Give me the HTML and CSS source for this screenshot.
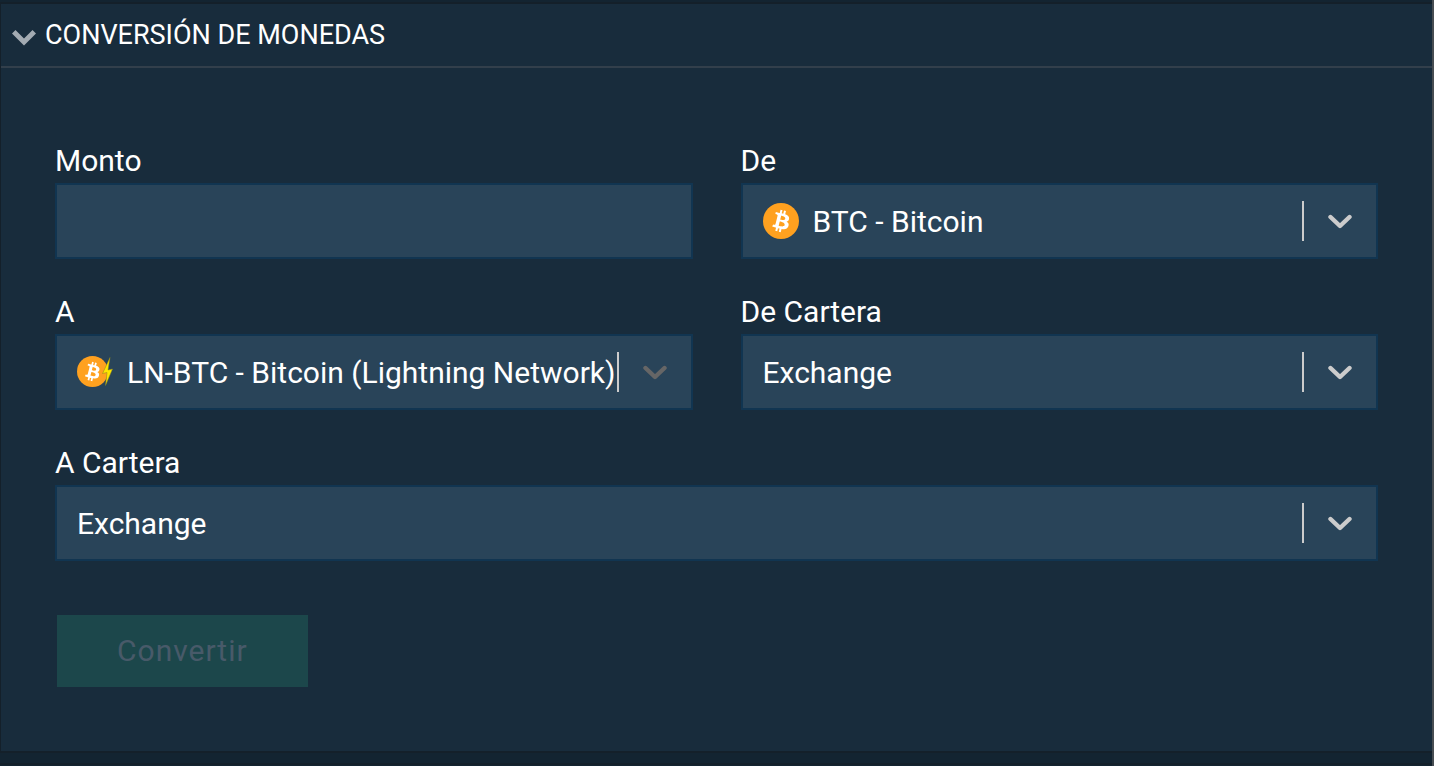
FILE: index.html
```html
<!DOCTYPE html>
<html lang="es">
<head>
    <meta charset="UTF-8">
    <meta name="viewport" content="width=device-width, initial-scale=1.0">
    <title>Conversión de Monedas</title>
    <link rel="stylesheet" href="styles.css">
</head>
<body>

    <!-- Shared icon shapes -->
    <svg class="symbols" aria-hidden="true">
        <symbol id="chevron" viewBox="0 0 24 16">
            <path d="M2.500 4 L12 13 L21.500 4" fill="none" stroke="currentColor" stroke-width="4.400" stroke-linecap="round" stroke-linejoin="round"/>
        </symbol>
        <symbol id="bitcoin" viewBox="0 0 32 32">
            <circle cx="16" cy="16" r="16" fill="#ffa11f"/>
            <path fill="#fff" d="M23.189 14.020c.314-2.096-1.283-3.223-3.465-3.975l.708-2.840-1.728-.430-.690 2.765c-.454-.114-.920-.220-1.385-.326l.695-2.783L15.596 6l-.708 2.839c-.376-.086-.746-.170-1.104-.260l.002-.009-2.384-.595-.460 1.846s1.283.294 1.256.312c.700.175.826.638.805 1.006l-.806 3.235c.048.012.110.030.180.057l-.183-.045-1.130 4.532c-.086.212-.303.531-.793.410.018.025-1.256-.313-1.256-.313l-.858 1.978 2.250.561c.418.105.828.215 1.231.318l-.715 2.872 1.727.430.708-2.840c.472.127.930.245 1.378.357l-.706 2.828 1.728.430.715-2.866c2.948.558 5.164.333 6.097-2.333.752-2.146-.037-3.385-1.588-4.192 1.130-.260 1.980-1.003 2.207-2.538zm-3.950 5.538c-.533 2.147-4.148.986-5.320.695l.950-3.805c1.172.293 4.929.872 4.370 3.110zm.535-5.569c-.487 1.953-3.495.960-4.470.717l.860-3.450c.975.243 4.118.696 3.610 2.733z"/>
        </symbol>
    </svg>

    <section class="panel">
        <!-- Panel header -->
        <header class="panel-header">
            <svg class="toggle-icon" viewBox="0 0 24 16" aria-hidden="true">
                <path d="M3.500 0 L12 8.400 L20.500 0 L24 3.500 L12 15.500 L0 3.500 Z" fill="currentColor"/>
            </svg>
            <h1>CONVERSIÓN DE MONEDAS</h1>
        </header>

        <!-- Conversion form -->
        <form class="convert-form">
            <div class="field">
                <label for="amount">Monto</label>
                <div class="control">
                    <input type="text" id="amount" name="amount">
                </div>
            </div>

            <div class="field">
                <label for="from">De</label>
                <div class="control">
                    <svg class="coin" aria-hidden="true"><use href="#bitcoin"/></svg>
                    <select id="from" name="from">
                        <option>BTC - Bitcoin</option>
                    </select>
                    <span class="separator"></span>
                    <svg class="chevron" aria-hidden="true"><use href="#chevron"/></svg>
                </div>
            </div>

            <div class="field">
                <label for="to">A</label>
                <div class="control locked">
                    <svg class="coin" viewBox="0 0 36 36" aria-hidden="true">
                        <use href="#bitcoin" x="0" y="2" width="31" height="31"/>
                        <path d="M33 3.500 L25.500 19.500 L30 18.500 L28.500 31.500 L35.500 15 L31 16 Z" fill="#ffe600" stroke="#8a8420" stroke-width="0.500"/>
                    </svg>
                    <select id="to" name="to" disabled>
                        <option>LN-BTC - Bitcoin (Lightning Network)</option>
                    </select>
                    <span class="separator"></span>
                    <svg class="chevron" aria-hidden="true"><use href="#chevron"/></svg>
                </div>
            </div>

            <div class="field">
                <label for="from-wallet">De Cartera</label>
                <div class="control">
                    <select id="from-wallet" name="from-wallet">
                        <option>Exchange</option>
                    </select>
                    <span class="separator"></span>
                    <svg class="chevron" aria-hidden="true"><use href="#chevron"/></svg>
                </div>
            </div>

            <div class="field wide">
                <label for="to-wallet">A Cartera</label>
                <div class="control">
                    <select id="to-wallet" name="to-wallet">
                        <option>Exchange</option>
                    </select>
                    <span class="separator"></span>
                    <svg class="chevron" aria-hidden="true"><use href="#chevron"/></svg>
                </div>
            </div>

            <div class="actions wide">
                <button type="submit" disabled>Convertir</button>
            </div>
        </form>
    </section>

    <footer class="panel-divider"></footer>

</body>
</html>
```
FILE: styles.css
```css
* {
    box-sizing: border-box;
}

body {
    margin: 0;
    min-height: 100vh;
    padding-top: 2px;
    background-color: #132431;
    border-right: 2px solid #474d52;
    color: #fff;
    font-family: Roboto, sans-serif;
    font-size: 30px;
}

.symbols {
    display: none;
}

.panel {
    background-color: #182c3c;
    border: 2px solid #14202a;
    border-left-width: 1px;
    border-right: none;
}

.panel-header {
    display: flex;
    align-items: center;
    gap: 9px;
    height: 64px;
    padding: 0 12px;
    border-bottom: 2px solid #323f4b;
}

.panel-header h1 {
    margin: 0;
    font-size: 27px;
    font-weight: 400;
}

.toggle-icon {
    width: 24px;
    height: 16px;
    margin-top: 6px;
    margin-left: -1px;
    color: #a3abb2;
}

.convert-form {
    display: grid;
    grid-template-columns: 1fr 1fr;
    column-gap: 48px;
    row-gap: 35px;
    padding: 75px 54px 64px;
}

.wide {
    grid-column: 1 / -1;
}

label {
    display: block;
    margin-bottom: 4px;
    line-height: 36px;
}

.control {
    display: flex;
    align-items: center;
    height: 76px;
    padding: 0 24px 0 20px;
    background-color: #294459;
    border: 2px solid #113551;
}

.coin {
    flex: none;
    width: 36px;
    height: 36px;
    margin-right: 14px;
}

input,
select {
    flex: 1;
    min-width: 0;
    height: 100%;
    padding: 0;
    border: none;
    outline: none;
    appearance: none;
    background: transparent;
    color: #fff;
    font: inherit;
    opacity: 1;
}

.separator {
    width: 2px;
    height: 40px;
    background-color: #ccc;
}

.chevron {
    flex: none;
    width: 24px;
    height: 16px;
    margin-left: 24px;
    color: #ccc;
}

.locked .chevron {
    color: #666;
}

.actions {
    padding: 19px 2px 0;
}

button {
    display: block;
    height: 72px;
    padding: 0 60px 2px;
    border: none;
    background-color: #1c474b;
    color: #485a69;
    font: inherit;
    letter-spacing: 1px;
}

/* Gap before the next panel */
.panel-divider {
    height: 12px;
    border-bottom: 2px solid #14202a;
}
```
